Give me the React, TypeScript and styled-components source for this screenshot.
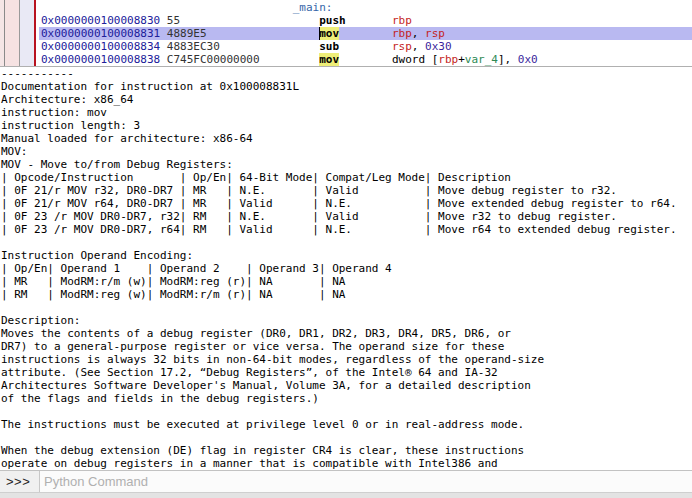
import styled, { createGlobalStyle } from 'styled-components'

const GlobalStyle = createGlobalStyle`
  html, body {
    margin: 0;
    padding: 0;
    overflow: hidden;
    background: #fff;
  }
`

const mono = `'DejaVu Sans Mono', 'Liberation Mono', monospace`

type Part = { text: string; kind?: 'reg' | 'num' | 'var' | 'plain' }

type Line = {
  address: string
  bytes: string
  mnemonic: string
  operands: Part[]
  selected?: boolean
  marked?: boolean
}

const lines: Line[] = [
  { address: '0x0000000100008830', bytes: '55', mnemonic: 'push', operands: [{ text: 'rbp', kind: 'reg' }] },
  {
    address: '0x0000000100008831',
    bytes: '4889E5',
    mnemonic: 'mov',
    marked: true,
    selected: true,
    operands: [
      { text: 'rbp', kind: 'reg' },
      { text: ', ' },
      { text: 'rsp', kind: 'reg' },
    ],
  },
  {
    address: '0x0000000100008834',
    bytes: '4883EC30',
    mnemonic: 'sub',
    operands: [
      { text: 'rsp', kind: 'reg' },
      { text: ', ' },
      { text: '0x30', kind: 'num' },
    ],
  },
  {
    address: '0x0000000100008838',
    bytes: 'C745FC00000000',
    mnemonic: 'mov',
    marked: true,
    operands: [
      { text: 'dword [' },
      { text: 'rbp', kind: 'reg' },
      { text: '+' },
      { text: 'var_4', kind: 'var' },
      { text: '], ' },
      { text: '0x0', kind: 'num' },
    ],
  },
]

const output = `-----------
Documentation for instruction at 0x100008831L
Architecture: x86_64
instruction: mov
instruction length: 3
Manual loaded for architecture: x86-64
MOV:
MOV - Move to/from Debug Registers:
| Opcode/Instruction       | Op/En| 64-Bit Mode| Compat/Leg Mode| Description
| 0F 21/r MOV r32, DR0-DR7 | MR   | N.E.       | Valid          | Move debug register to r32.
| 0F 21/r MOV r64, DR0-DR7 | MR   | Valid      | N.E.           | Move extended debug register to r64.
| 0F 23 /r MOV DR0-DR7, r32| RM   | N.E.       | Valid          | Move r32 to debug register.
| 0F 23 /r MOV DR0-DR7, r64| RM   | Valid      | N.E.           | Move r64 to extended debug register.

Instruction Operand Encoding:
| Op/En| Operand 1    | Operand 2    | Operand 3| Operand 4
| MR   | ModRM:r/m (w)| ModRM:reg (r)| NA       | NA
| RM   | ModRM:reg (w)| ModRM:r/m (r)| NA       | NA

Description:
Moves the contents of a debug register (DR0, DR1, DR2, DR3, DR4, DR5, DR6, or
DR7) to a general-purpose register or vice versa. The operand size for these
instructions is always 32 bits in non-64-bit modes, regardless of the operand-size
attribute. (See Section 17.2, \u201cDebug Registers\u201d, of the Intel\u00ae 64 and IA-32
Architectures Software Developer's Manual, Volume 3A, for a detailed description
of the flags and fields in the debug registers.)

The instructions must be executed at privilege level 0 or in real-address mode.

When the debug extension (DE) flag in register CR4 is clear, these instructions
operate on debug registers in a manner that is compatible with Intel386 and`

const partColors = {
  reg: '#c41e1e',
  num: '#3a1f9c',
  var: '#2e8a55',
  plain: '#000',
}

export default function App() {
  return (
    <>
      <GlobalStyle />
      <Window>
        <Disassembly>
          <Strip $width={4} $bg="#f5e6e6" $edge="#8a8a8a" />
          <Strip $width={14} $bg="#f6e2e2" $edge="#9a9a9a" />
          <Strip $width={14} $bg="#e9e9f5" $edge="#b8121f" $edgeWidth={2} />
          <Listing>
            <LabelRow>_main:</LabelRow>
            {lines.map(line => (
              <Row key={line.address} $selected={line.selected}>
                <Address>{line.address}</Address>
                <Bytes>{line.bytes}</Bytes>
                <Mnemonic $marked={line.marked} $cursor={line.selected}>
                  {line.mnemonic}
                </Mnemonic>
                <span>
                  {line.operands.map((part, i) => (
                    <Operand key={i} $color={partColors[part.kind ?? 'plain']}>
                      {part.text}
                    </Operand>
                  ))}
                </span>
              </Row>
            ))}
          </Listing>
        </Disassembly>

        <Output>{output}</Output>

        <CommandBar>
          <Prompt>&gt;&gt;&gt;</Prompt>
          <CommandInput placeholder="Python Command" />
        </CommandBar>
        <BottomStrip />
      </Window>
    </>
  )
}

const Window = styled.div`
  display: flex;
  flex-direction: column;
  width: 692px;
  height: 498px;
  overflow: hidden;
  font-family: ${mono};
  font-size: 11px;
`

const Disassembly = styled.div`
  display: flex;
  flex: none;
  height: 67px;
  box-sizing: border-box;
  border-bottom: 1px solid #b0b0b0;
  background: #fff;
`

const Strip = styled.div<{ $width: number; $bg: string; $edge: string; $edgeWidth?: number }>`
  flex: none;
  width: ${({ $width }) => $width}px;
  background: ${({ $bg }) => $bg};
  border-right: ${({ $edgeWidth = 1 }) => $edgeWidth}px solid ${({ $edge }) => $edge};
`

const Listing = styled.div`
  flex: 1;
  padding: 1px 0 0 3px;
  overflow: hidden;
`

const LabelRow = styled.div`
  height: 13px;
  line-height: 13px;
  padding-left: calc(2px + 38ch);
  color: #3465a8;
  white-space: pre;
`

const Row = styled.div<{ $selected?: boolean }>`
  display: flex;
  height: 13px;
  line-height: 13px;
  padding-left: 2px;
  white-space: pre;
  background: ${({ $selected }) => ($selected ? '#b9b9f1' : 'transparent')};
`

const Address = styled.span`
  flex: none;
  width: 19ch;
  color: #20209a;
`

const Bytes = styled.span`
  flex: none;
  width: 23ch;
  color: #333;
`

const Mnemonic = styled.span<{ $marked?: boolean; $cursor?: boolean }>`
  flex: none;
  width: 11ch;
  font-weight: bold;
  color: #000;
  background: ${({ $marked }) => ($marked ? 'linear-gradient(to right, #eeee78 3ch, transparent 3ch)' : 'none')};
  box-shadow: ${({ $cursor }) => ($cursor ? 'inset 1px 0 0 #000' : 'none')};
`

const Operand = styled.span<{ $color: string }>`
  color: ${({ $color }) => $color};
`

const Output = styled.pre`
  flex: 1;
  min-height: 0;
  margin: 0;
  padding: 0 0 0 1px;
  overflow: hidden;
  font-family: ${mono};
  font-size: 11px;
  line-height: 13px;
  color: #000;
  background: #fff;
`

const CommandBar = styled.div`
  display: flex;
  align-items: stretch;
  flex: none;
  height: 22px;
  box-sizing: border-box;
  border-top: 1px solid #c2c2c2;
  background: #f0f0f0;
`

const Prompt = styled.div`
  display: flex;
  align-items: center;
  width: 39px;
  padding-left: 6px;
  box-sizing: border-box;
  font-family: 'Liberation Sans', Arial, sans-serif;
  font-size: 13px;
  letter-spacing: 0.5px;
  color: #222;
`

const CommandInput = styled.input`
  flex: 1;
  min-width: 0;
  margin: 0;
  padding: 0 4px;
  border: none;
  border-left: 1px solid #c8c8c8;
  outline: none;
  background: #fbfbfb;
  font-family: 'Liberation Sans', Arial, sans-serif;
  font-size: 13px;
  color: #000;

  &::placeholder {
    color: #b0b0b0;
  }
`

const BottomStrip = styled.div`
  flex: none;
  height: 6px;
  box-sizing: border-box;
  border-top: 1px solid #cfcfcf;
  background: #e3e3e3;
`
